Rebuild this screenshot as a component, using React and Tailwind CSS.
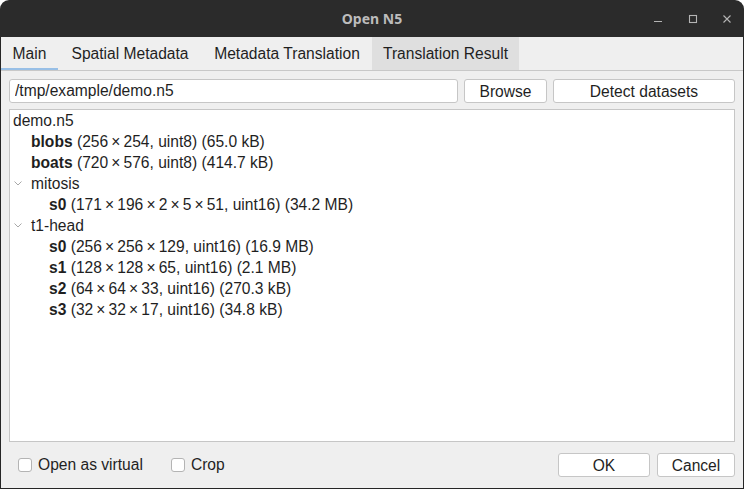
import { useState } from 'react';

const tabs = [
  { label: 'Main', w: 'w-[57px]' },
  { label: 'Spatial Metadata', w: 'w-[144px]' },
  { label: 'Metadata Translation', w: 'w-[170px]' },
  { label: 'Translation Result', w: 'w-[147px]' },
];

const rows = [
  { depth: 0, name: 'demo.n5' },
  { depth: 1, name: 'blobs', info: '(256\u2009×\u2009254, uint8) (65.0 kB)', bold: true },
  { depth: 1, name: 'boats', info: '(720\u2009×\u2009576, uint8) (414.7 kB)', bold: true },
  { depth: 1, name: 'mitosis', group: true },
  { depth: 2, name: 's0', info: '(171\u2009×\u2009196\u2009×\u20092\u2009×\u20095\u2009×\u200951, uint16) (34.2 MB)', bold: true },
  { depth: 1, name: 't1-head', group: true },
  { depth: 2, name: 's0', info: '(256\u2009×\u2009256\u2009×\u2009129, uint16) (16.9 MB)', bold: true },
  { depth: 2, name: 's1', info: '(128\u2009×\u2009128\u2009×\u200965, uint16) (2.1 MB)', bold: true },
  { depth: 2, name: 's2', info: '(64\u2009×\u200964\u2009×\u200933, uint16) (270.3 kB)', bold: true },
  { depth: 2, name: 's3', info: '(32\u2009×\u200932\u2009×\u200917, uint16) (34.8 kB)', bold: true },
];

function Chevron() {
  return (
    <svg width="8" height="5" viewBox="0 0 8 5" className="absolute left-[-17px] top-[9px]">
      <path d="M0.5 0.5 L4 4 L7.5 0.5" fill="none" stroke="#a8a8a8" strokeWidth="1" />
    </svg>
  );
}

function Checkbox({ label }) {
  const [on, setOn] = useState(false);
  return (
    <label className="flex items-center gap-[6px] cursor-default" onClick={() => setOn(!on)}>
      <span className="w-[14px] h-[14px] rounded-[3px] border border-[#b4b4b4] bg-white flex items-center justify-center text-[11px]">
        {on ? '✓' : ''}
      </span>
      <span>{label}</span>
    </label>
  );
}

export default function App() {
  const [tab, setTab] = useState(0);
  const [path, setPath] = useState('/tmp/example/demo.n5');

  return (
    <div className="w-[744px] h-[489px] bg-white" style={{ fontFamily: '"Liberation Sans", Arial, sans-serif' }}>
      <div className="w-full h-full flex flex-col rounded-t-[9px] overflow-hidden bg-[#2b2b2b]">
        {/* title bar */}
        <div className="h-[37px] shrink-0 relative flex items-center justify-center">
          <span className="text-[14px] font-bold text-[#bcbcbc]" style={{ fontFamily: '"Noto Sans", sans-serif' }}>Open N5</span>
          <div className="absolute right-0 top-0 h-full flex items-center">
            <svg width="10" height="10" viewBox="0 0 10 10" className="absolute left-[-91px] top-[13px]">
              <path d="M1 8.5 H9" stroke="#b4b4b4" strokeWidth="1.2" />
            </svg>
            <svg width="10" height="10" viewBox="0 0 10 10" className="absolute left-[-56px] top-[14px]">
              <rect x="1.5" y="1.5" width="7" height="7" fill="none" stroke="#b4b4b4" strokeWidth="1.1" />
            </svg>
            <svg width="10" height="10" viewBox="0 0 10 10" className="absolute left-[-22px] top-[14px]">
              <path d="M1.5 1.5 L8.5 8.5 M8.5 1.5 L1.5 8.5" stroke="#b4b4b4" strokeWidth="1.1" />
            </svg>
          </div>
        </div>

        {/* body */}
        <div className="flex-1 flex flex-col bg-[#efefef] border-x border-b border-[#262626] text-[15.6px] text-[#1f1f1f]">
          <div className="h-[33px] shrink-0 flex border-b border-[#c8c8c8] box-content">
            {tabs.map((t, i) => (
              <button
                key={t.label}
                onClick={() => setTab(i)}
                className={`${t.w} h-full flex items-center justify-center relative ${i === 3 ? 'bg-[#dfdfdf]' : ''}`}
              >
                {t.label}
                {tab === i && <span className="absolute left-0 right-0 bottom-0 h-[2px] bg-[#98bfe6]" />}
              </button>
            ))}
          </div>

          <div className="flex-1 flex flex-col px-[8px] pt-[8px]">
            <div className="flex gap-[6px] h-[24px]">
              <input
                value={path}
                onChange={(e) => setPath(e.target.value)}
                className="w-[449px] h-full bg-white border border-[#c6c6c6] rounded-[3px] px-[5px] outline-none"
              />
              <button className="w-[83px] h-full bg-white border border-[#c6c6c6] rounded-[3px]">Browse</button>
              <button className="flex-1 h-full bg-white border border-[#c6c6c6] rounded-[3px]">Detect datasets</button>
            </div>

            <div className="mt-[6px] flex-1 bg-white border border-[#c6c6c6] pl-[3px]">
              {rows.map((r, i) => (
                <div key={i} className="h-[21px] flex items-center whitespace-pre" style={{ paddingLeft: r.depth * 18 }}>
                  <span className="relative">
                    {r.group && <Chevron />}
                    {r.bold ? <b className="font-bold">{r.name}</b> : r.name}
                  </span>
                  {r.info && <span> {r.info}</span>}
                </div>
              ))}
            </div>

            <div className="h-[46px] shrink-0 flex items-center">
              <div className="ml-[9px] flex items-center gap-[28px]">
                <Checkbox label="Open as virtual" />
                <Checkbox label="Crop" />
              </div>
              <div className="ml-auto flex gap-[7px]">
                <button className="w-[92px] h-[24px] bg-white border border-[#c6c6c6] rounded-[3px]">OK</button>
                <button className="w-[78px] h-[24px] bg-white border border-[#c6c6c6] rounded-[3px]">Cancel</button>
              </div>
            </div>
          </div>
        </div>
      </div>
    </div>
  );
}
